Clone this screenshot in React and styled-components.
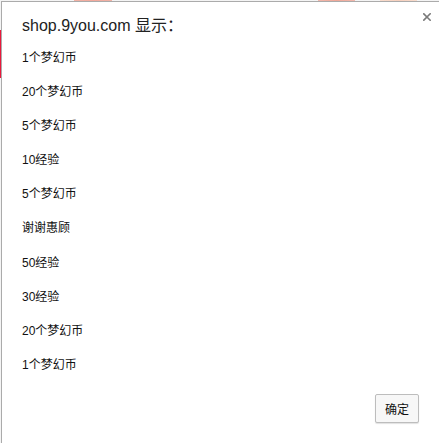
import styled, { createGlobalStyle } from 'styled-components';

const GlobalStyle = createGlobalStyle`
  html, body {
    margin: 0;
    padding: 0;
    background: #ffffff;
  }
  #root {
    height: 443px;
  }
`;

const prizes = [
  '1个梦幻币',
  '20个梦幻币',
  '5个梦幻币',
  '10经验',
  '5个梦幻币',
  '谢谢惠顾',
  '50经验',
  '30经验',
  '20个梦幻币',
  '1个梦幻币',
];

function App() {
  return (
    <>
      <GlobalStyle />
      <Backdrop>
        <Dialog>
          <Header>
            <Title>shop.9you.com 显示：</Title>
            <CloseButton aria-label="关闭">
              <svg width="8" height="8" viewBox="0 0 8 8">
                <path d="M0.8 0.8 L7.2 7.2 M7.2 0.8 L0.8 7.2" stroke="#7a7a7a" strokeWidth="1.6" strokeLinecap="square" />
              </svg>
            </CloseButton>
          </Header>

          <Message>
            {prizes.map((p, i) => (
              <Line key={i}>{p}</Line>
            ))}
          </Message>

          <Footer>
            <OkButton>确定</OkButton>
          </Footer>
        </Dialog>
      </Backdrop>
    </>
  );
}

const Backdrop = styled.div`
  height: 443px;
  box-sizing: border-box;
  padding: 1px 0 0 1px;
  background:
    linear-gradient(#e8193c, #e8193c) 0 30px / 1px 48px no-repeat,
    linear-gradient(90deg, #f0b2a6, #f3a99c, #f0b2a6) 74px 0 / 38px 1px no-repeat,
    linear-gradient(90deg, #f2b8ac, #f0a898, #f2b8ac) 318px 0 / 37px 1px no-repeat,
    linear-gradient(90deg, #f8dccc, #f6cfbd, #f8dccc) 380px 0 / 37px 1px no-repeat,
    #f4f4f4;
  font-family: "Liberation Sans", "Noto Sans CJK SC", sans-serif;
`;

const Dialog = styled.div`
  height: 100%;
  box-sizing: border-box;
  background: #ffffff;
  border-top: 1px solid #ababab;
  border-left: 1px solid #ababab;
  padding: 0 20px 20px 20px;
  display: flex;
  flex-direction: column;
`;

const Header = styled.div`
  display: flex;
  justify-content: space-between;
  align-items: flex-start;
`;

const Title = styled.div`
  margin-top: 14px;
  font-size: 16px;
  line-height: 20px;
  color: #222222;
`;

const CloseButton = styled.button`
  margin-top: 11px;
  margin-right: -12px;
  width: 8px;
  height: 8px;
  padding: 0;
  border: none;
  background: none;
  display: flex;
  cursor: pointer;
`;

const Message = styled.div`
  margin-top: 14px;
  display: flex;
  flex-direction: column;
  gap: 17.1px;
`;

const Line = styled.div`
  font-size: 12px;
  line-height: 17px;
  color: #111111;
`;

const Footer = styled.div`
  margin-top: auto;
  display: flex;
  justify-content: flex-end;
`;

const OkButton = styled.button`
  width: 44px;
  height: 29px;
  padding: 0;
  border: 1px solid #bdbdbd;
  border-radius: 2px;
  background: #f7f7f7;
  box-shadow: 0 1px 1px rgba(0, 0, 0, 0.12);
  font-family: "Liberation Sans", "Noto Sans CJK SC", sans-serif;
  font-size: 12px;
  color: #111111;
`;

export default App;
